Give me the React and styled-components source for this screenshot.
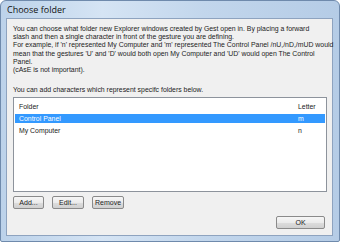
import React from "react";
import styled, { createGlobalStyle } from "styled-components";

const Global = createGlobalStyle`
  html, body {
    margin: 0;
    padding: 0;
    background: #ffffff;
  }
  * {
    box-sizing: border-box;
  }
`;

const Window = styled.div`
  width: 340px;
  height: 242px;
  display: flex;
  flex-direction: column;
  padding: 0 6px 5px 5px;
  border: 1px solid #6f8aac;
  border-radius: 6px 6px 2px 2px;
  background: linear-gradient(90deg, #bcd2ea 0%, #d5e4f4 30%, #c2d6ec 60%, #b5cce6 100%);
  font-family: "Liberation Sans", Arial, sans-serif;
`;

const TitleBar = styled.div`
  height: 17px;
  display: flex;
  align-items: center;
  padding-left: 1px;
  font-family: "Open Sans", sans-serif;
  font-size: 9px;
  color: #111;
`;

const Panel = styled.div`
  flex: 1;
  display: flex;
  flex-direction: column;
  background: #f0f0f0;
  border: 1px solid #8ea3bf;
  padding: 6px 5px 6px 6px;
  font-size: 6.9px;
  color: #222;
`;

const Intro = styled.p`
  margin: 0;
  line-height: 8.2px;
  white-space: pre;
`;

const Hint = styled.p`
  margin: 12px 0 0;
  line-height: 8.2px;
  white-space: nowrap;
`;

const List = styled.div`
  margin-top: 3px;
  height: 95px;
  background: #fff;
  border: 1px solid #8d939c;
  padding: 0 1px;
`;

const Row = styled.div`
  display: flex;
  align-items: center;
  height: ${(p) => (p.$header ? "16px" : "9px")};
  margin-bottom: ${(p) => (p.$header ? "0" : "3px")};
  background: ${(p) => (p.$selected ? "#3399ff" : "transparent")};
  color: ${(p) => (p.$selected ? "#fff" : "#222")};
  padding: 0 0 0 4px;
`;

const NameCell = styled.span`
  flex: 1;
`;

const LetterCell = styled.span`
  width: 27px;
`;

const Buttons = styled.div`
  display: flex;
  gap: 8px;
  margin-top: 4px;
`;

const Button = styled.button`
  width: ${(p) => p.$w}px;
  height: 13px;
  padding: 0;
  font-family: "Liberation Sans", Arial, sans-serif;
  font-size: 7px;
  color: #222;
  border: 1px solid #8a8a8a;
  border-radius: 2px;
  background: linear-gradient(#f6f6f6 0%, #ebebeb 50%, #dddddd 51%, #d0d0d0 100%);
`;

const Footer = styled.div`
  margin-top: auto;
  display: flex;
  justify-content: flex-end;
  padding-right: 2px;
`;

const text = `You can choose what folder new Explorer windows created by Gest open in. By placing a forward
slash and then a single character in front of the gesture you are defining.
For example, if 'n' represented My Computer and 'm' represented The Control Panel /nU,/nD,/mUD would
mean that the gestures 'U' and 'D' would both open My Computer and 'UD' would open The Control
Panel.
(cAsE is not important).`;

const rows = [
  { name: "Control Panel", letter: "m", selected: true },
  { name: "My Computer", letter: "n" },
];

export default function App() {
  return (
    <>
      <Global />
      <Window>
        <TitleBar>Choose folder</TitleBar>
        <Panel>
          <Intro>{text}</Intro>
          <Hint>You can add characters which represent specifc folders below.</Hint>
          <List>
            <Row $header>
              <NameCell>Folder</NameCell>
              <LetterCell>Letter</LetterCell>
            </Row>
            {rows.map((r) => (
              <Row key={r.name} $selected={r.selected}>
                <NameCell>{r.name}</NameCell>
                <LetterCell>{r.letter}</LetterCell>
              </Row>
            ))}
          </List>
          <Buttons>
            <Button $w={31}>Add...</Button>
            <Button $w={32}>Edit...</Button>
            <Button $w={32}>Remove</Button>
          </Buttons>
          <Footer>
            <Button $w={49}>OK</Button>
          </Footer>
        </Panel>
      </Window>
    </>
  );
}
